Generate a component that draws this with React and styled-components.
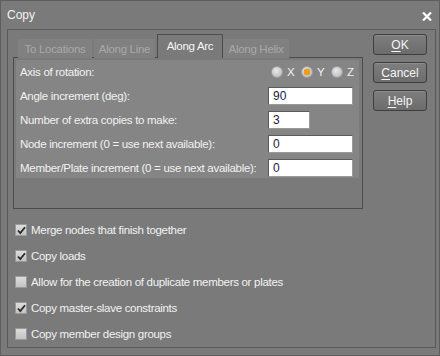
import styled, { createGlobalStyle, css } from 'styled-components';

const GlobalStyle = createGlobalStyle`
  html, body {
    margin: 0;
    padding: 0;
    background: #7a7a7a;
  }
  * {
    box-sizing: border-box;
  }
`;

const Window = styled.div`
  width: 440px;
  height: 356px;
  background: #7a7a7a;
  border: 1px solid #5e5e5e;
  font-family: 'Liberation Sans', Arial, sans-serif;
  font-size: 11.5px;
  letter-spacing: -0.3px;
  color: #f2f2f2;
  display: flex;
  flex-direction: column;
  white-space: nowrap;
`;

const TitleBar = styled.div`
  height: 28px;
  flex: none;
  display: flex;
  align-items: center;
  justify-content: space-between;
  padding: 0 7px 0 6px;
  font-size: 12px;
  letter-spacing: 0;
`;

const CloseIcon = styled.svg`
  width: 10px;
  height: 9px;
  margin-top: 2px;
`;

const Frame = styled.div`
  flex: 1;
  margin: 0 3px 7px 6px;
  border: 1px solid #5a5a5a;
  display: flex;
  gap: 10px;
  padding: 4px 6px 0 5px;
`;

const LeftCol = styled.div`
  width: 350px;
  display: flex;
  flex-direction: column;
`;

const TabStrip = styled.div`
  display: flex;
  align-items: flex-end;
  height: 24px;
  padding-left: 5px;
  margin-bottom: -1px;
  position: relative;
  z-index: 1;
`;

const Tab = styled.div`
  width: ${(p) => p.$w}px;
  height: 19px;
  display: flex;
  align-items: center;
  justify-content: center;
  margin-right: 2px;
  color: #a9a9a9;
  background: #808080;
  ${(p) =>
    p.$active &&
    css`
      height: 24px;
      color: #f7f7f7;
      background: #7a7a7a;
      border: 1px solid #4c4c4c;
      border-bottom: none;
      padding-bottom: 1px;
      margin-right: 0;
    `}
`;

const TabPanel = styled.div`
  height: 152px;
  border: 1px solid #4c4c4c;
  padding: 2px 3px 0 2px;
`;

const Group = styled.div`
  background: #858585;
  padding: 3px 6px 1px 4px;
  display: flex;
  flex-direction: column;
  gap: 6px;
`;

const Row = styled.div`
  height: 18px;
  display: flex;
  align-items: center;
  justify-content: space-between;
`;

const Input = styled.div`
  flex: none;
  width: ${(p) => p.$w || 85}px;
  height: 18px;
  margin-right: ${(p) => p.$offset || 0}px;
  background: #ffffff;
  border: 1px solid #5a5a5a;
  border-right-color: #9a9a9a;
  border-bottom-color: #9a9a9a;
  color: #1b1b3a;
  padding: 1px 0 0 4px;
  font-size: 12px;
  letter-spacing: 0;
  line-height: 15px;
`;

const Radios = styled.div`
  display: flex;
  gap: 4px;
  margin-right: -4px;
`;

const RadioItem = styled.div`
  display: flex;
  align-items: center;
  gap: 4px;
  width: 26px;
`;

const RadioDot = styled.span`
  flex: none;
  width: 12px;
  height: 12px;
  border-radius: 50%;
  border: 1px solid #9c9c9c;
  background: radial-gradient(circle at 40% 35%, #e8e8e8, #b5b5b5);
  display: flex;
  align-items: center;
  justify-content: center;
  &::after {
    content: '';
    width: 6px;
    height: 6px;
    border-radius: 50%;
    background: ${(p) => (p.$on ? '#f0a010' : 'transparent')};
    box-shadow: ${(p) => (p.$on ? '0 0 1px #c07000' : 'none')};
  }
`;

const CheckList = styled.div`
  display: flex;
  flex-direction: column;
  gap: 12px;
  padding: 14px 0 0 2px;
`;

const CheckRow = styled.div`
  display: flex;
  align-items: center;
  gap: 4px;
  height: 14px;
`;

const CheckBox = styled.span`
  width: 12px;
  height: 12px;
  border: 1px solid #9a9a9a;
  background: linear-gradient(#dcdcdc, #c4c4c4);
  display: flex;
  align-items: center;
  justify-content: center;
`;

const ButtonCol = styled.div`
  display: flex;
  flex-direction: column;
  gap: 7px;
`;

const Button = styled.div`
  width: 54px;
  height: 21px;
  border: 1px solid #3e3e3e;
  border-radius: 3px;
  background: linear-gradient(#7e7e7e, #6c6c6c);
  box-shadow: inset 0 1px 0 #8c8c8c;
  display: flex;
  align-items: center;
  justify-content: center;
  font-size: 12px;
  letter-spacing: 0;
  color: #f4f4f4;
  u {
    text-decoration: underline;
    text-underline-offset: 2px;
  }
`;

const tabs = [
  { label: 'To Locations', w: 74 },
  { label: 'Along Line', w: 61 },
  { label: 'Along Arc', w: 66, active: true },
  { label: 'Along Helix', w: 66 },
];

const fields = [
  { label: 'Angle increment (deg):', value: '90' },
  { label: 'Number of extra copies to make:', value: '3', w: 42, offset: 43 },
  { label: 'Node increment (0 = use next available):', value: '0' },
  { label: 'Member/Plate increment (0 = use next available):', value: '0' },
];

const checks = [
  { label: 'Merge nodes that finish together', on: true },
  { label: 'Copy loads', on: true },
  { label: 'Allow for the creation of duplicate members or plates', on: false },
  { label: 'Copy master-slave constraints', on: true },
  { label: 'Copy member design groups', on: false },
];

function Check({ on }) {
  return (
    <CheckBox>
      {on && (
        <svg width="9" height="9" viewBox="0 0 9 9">
          <path d="M1 4.5 L3.3 7 L8 1.2" stroke="#2a2a2a" strokeWidth="1.8" fill="none" />
        </svg>
      )}
    </CheckBox>
  );
}

export default function App() {
  return (
    <>
      <GlobalStyle />
      <Window>
        <TitleBar>
          <span>Copy</span>
          <CloseIcon viewBox="0 0 10 9">
            <path d="M1 0.5 L9 8.5 M9 0.5 L1 8.5" stroke="#ffffff" strokeWidth="2.2" />
          </CloseIcon>
        </TitleBar>
        <Frame>
          <LeftCol>
            <TabStrip>
              {tabs.map((t) => (
                <Tab key={t.label} $w={t.w} $active={t.active}>
                  {t.label}
                </Tab>
              ))}
            </TabStrip>
            <TabPanel>
              <Group>
                <Row>
                  <span>Axis of rotation:</span>
                  <Radios>
                    {['X', 'Y', 'Z'].map((a) => (
                      <RadioItem key={a}>
                        <RadioDot $on={a === 'Y'} />
                        <span>{a}</span>
                      </RadioItem>
                    ))}
                  </Radios>
                </Row>
                {fields.map((f) => (
                  <Row key={f.label}>
                    <span>{f.label}</span>
                    <Input $w={f.w} $offset={f.offset}>
                      {f.value}
                    </Input>
                  </Row>
                ))}
              </Group>
            </TabPanel>
            <CheckList>
              {checks.map((c) => (
                <CheckRow key={c.label}>
                  <Check on={c.on} />
                  <span>{c.label}</span>
                </CheckRow>
              ))}
            </CheckList>
          </LeftCol>
          <ButtonCol>
            <Button>
              <u>O</u>K
            </Button>
            <Button>
              <u>C</u>ancel
            </Button>
            <Button>
              <u>H</u>elp
            </Button>
          </ButtonCol>
        </Frame>
      </Window>
    </>
  );
}
